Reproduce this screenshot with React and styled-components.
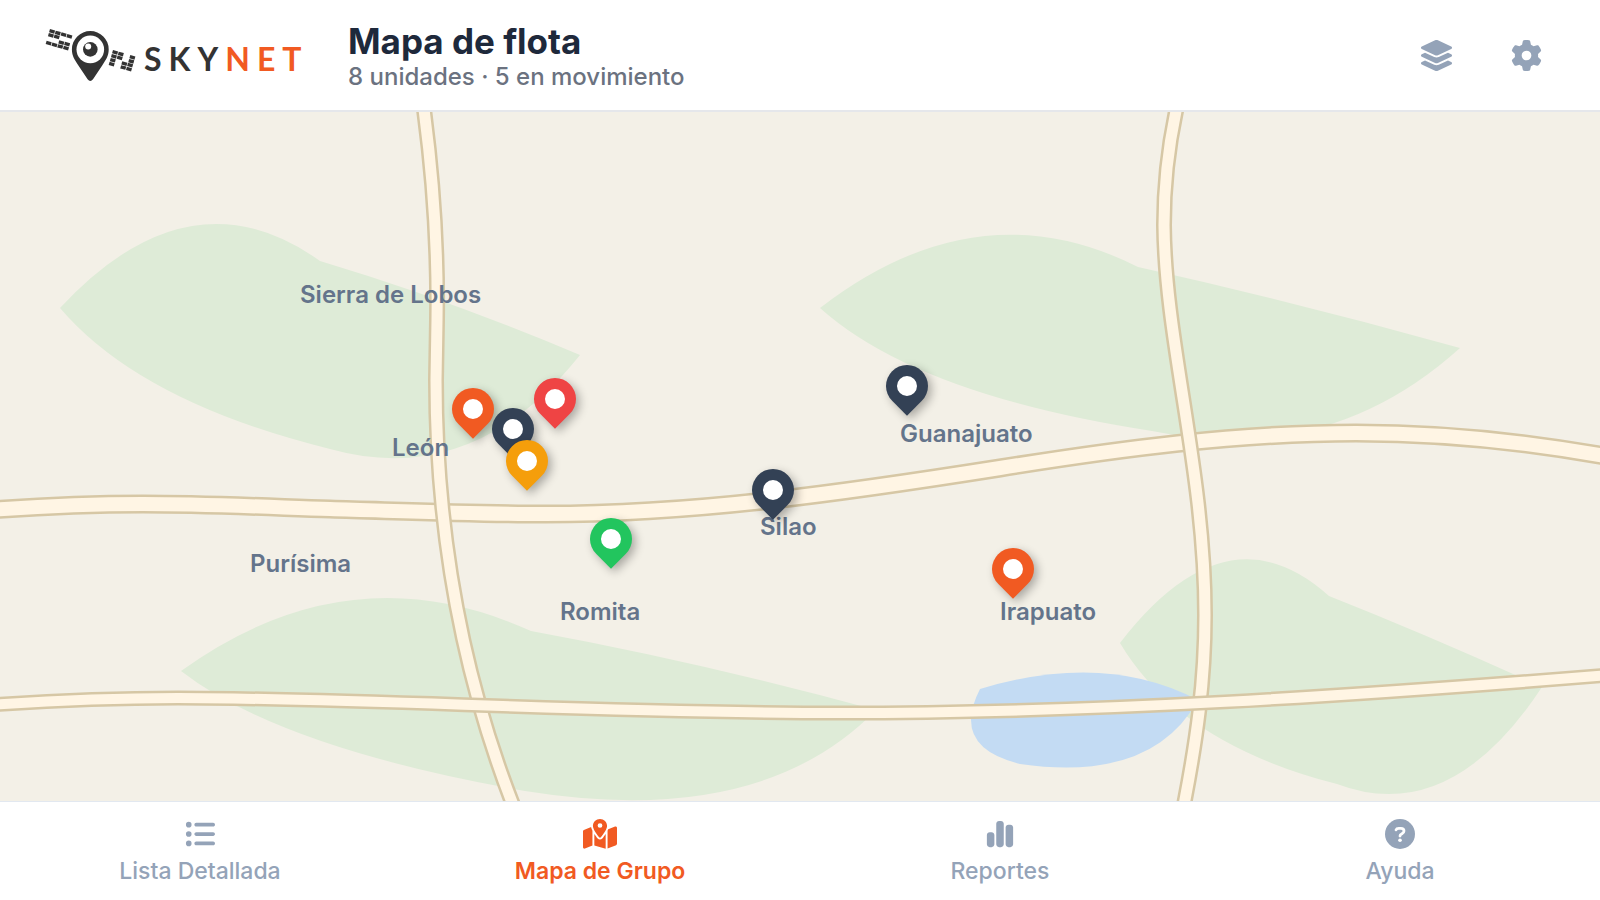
import React, { useState } from 'react';
import styled, { createGlobalStyle } from 'styled-components';
import {
  FaChartSimple,
  FaGear,
  FaLayerGroup,
  FaListUl,
  FaMapLocationDot,
} from 'react-icons/fa6';

const ORANGE = '#f15a22';
const NAVY = '#334155';

// x, y en % del mapa (centro del pin)
const units = [
  { id: 'u1', color: ORANGE, x: 29.55, y: 43.1 },
  { id: 'u2', color: NAVY, x: 32.05, y: 46 },
  { id: 'u3', color: '#ef4444', x: 34.7, y: 41.65 },
  { id: 'u4', color: '#f59e0b', x: 32.95, y: 50.65 },
  { id: 'u5', color: '#22c55e', x: 38.2, y: 62 },
  { id: 'u6', color: NAVY, x: 48.3, y: 54.9 },
  { id: 'u7', color: NAVY, x: 56.7, y: 39.8 },
  { id: 'u8', color: ORANGE, x: 63.3, y: 66.3 },
];

const places = [
  { name: 'Sierra de Lobos', x: 18.75, y: 26.5 },
  { name: 'León', x: 24.5, y: 48.7 },
  { name: 'Purísima', x: 15.625, y: 65.6 },
  { name: 'Romita', x: 35, y: 72.5 },
  { name: 'Silao', x: 47.5, y: 60.3 },
  { name: 'Guanajuato', x: 56.25, y: 46.7 },
  { name: 'Irapuato', x: 62.5, y: 72.5 },
];

const roads = [
  {
    id: 'main',
    d: 'M-10,398 Q72,392 143,392 C205,392 268,395 330,397 C402,399 473,402 545,402 C697,402 848,380 1000,356 C1119,337 1237,321 1356,321 Q1478,321 1610,345',
    outer: 19,
    inner: 14,
  },
  {
    id: 'west',
    d: 'M423,-10 C434,70 438,138 437,208 L436,268 C436,408 459,558 517,703',
    outer: 16,
    inner: 11,
  },
  {
    id: 'east',
    d: 'M1178,-10 C1167,38 1164,78 1164,113 C1165,230 1205,358 1205,503 C1205,568 1197,628 1182,703',
    outer: 16,
    inner: 11,
  },
  {
    id: 'south',
    d: 'M-10,593 Q90,586 178,586 C360,586 600,601 840,601 C1100,601 1350,584 1610,563',
    outer: 15,
    inner: 10,
  },
];

const forests = [
  'M60,196 Q190,56 320,149 Q450,188 580,243 Q473,377 330,337 Q140,290 60,196 Z',
  'M820,196 Q978,74 1138,155 Q1300,191 1460,236 Q1328,355 1152,319 Q917,283 820,196 Z',
  'M181,559 Q350,437 531,519 Q700,550 876,598 Q760,717 525,679 Q280,636 181,559 Z',
  'M1120,531 Q1227,392 1329,484 Q1430,524 1542,575 Q1450,715 1337,672 Q1180,632 1120,531 Z',
];

const tabs = [
  { id: 'lista', label: 'Lista Detallada', icon: FaListUl, size: 30 },
  { id: 'mapa', label: 'Mapa de Grupo', icon: FaMapLocationDot, size: 34 },
  { id: 'reportes', label: 'Reportes', icon: FaChartSimple, size: 30 },
  { id: 'ayuda', label: 'Ayuda', icon: HelpIcon, size: 30 },
];

// Celdas de los paneles solares del satélite: forman una S y una N
const panelS = ['1111', '1100', '0011', '1111'];
const panelN = ['1101', '1101', '1011', '1011'];

function SolarPanel({ rows, x, y }) {
  return (
    <g transform={`translate(${x} ${y}) rotate(16)`}>
      {rows.map((row, r) =>
        row
          .split('')
          .map((cell, c) =>
            cell === '1' ? (
              <rect
                key={`${r}-${c}`}
                x={c * 6}
                y={r * 4.1}
                width={5.3}
                height={3.4}
              />
            ) : null
          )
      )}
    </g>
  );
}

function HelpIcon() {
  return (
    <svg viewBox="0 0 512 512" fill="currentColor">
      <circle cx="256" cy="256" r="256" />
      <path
        d="M188 186 C194 168 212 160 236 160 H270 C302 160 324 178 324 206 C324 232 308 243 290 253 C268 265 256 272 256 292"
        fill="none"
        stroke="#fff"
        strokeWidth="48"
        strokeLinecap="round"
      />
      <circle cx="256" cy="362" r="31" fill="#fff" />
    </svg>
  );
}

function Logo() {
  return (
    <Brand href="#" aria-label="Skynet">
      <svg width="92" height="54" viewBox="0 0 92 54" fill="#333333">
        <SolarPanel rows={panelS} x={5} y={1} />
        <path d="M45.3 3 a18.4 18.4 0 0 1 18.4 18.4 c0 6.5 -3 10.5 -6.5 16 L48 51.2 q-2.7 3.4 -5.4 0 L33.4 37.4 c-3.5 -5.5 -6.5 -9.5 -6.5 -16 A18.4 18.4 0 0 1 45.3 3 Z" />
        <circle cx="45.3" cy="21.4" r="13.8" fill="#fff" />
        <circle cx="45.3" cy="21.4" r="7.3" />
        <circle cx="43.2" cy="18.4" r="3" fill="#fff" />
        <SolarPanel rows={panelN} x={68} y={22} />
      </svg>
      <Wordmark>
        SKY<b>NET</b>
      </Wordmark>
    </Brand>
  );
}

function FleetMap() {
  return (
    <MapArea>
      <MapCanvas
        viewBox="0 0 1600 689"
        preserveAspectRatio="none"
        aria-hidden="true"
      >
        {forests.map((d) => (
          <path key={d} d={d} fill="#deebd7" />
        ))}
        <path
          d="M980,577 Q1105,539 1198,588 Q1152,671 1020,652 Q950,635 980,577 Z"
          fill="#c3dbf3"
        />
        {roads.map((road) => (
          <g key={road.id} fill="none">
            <path d={road.d} stroke="#d6c7a5" strokeWidth={road.outer} />
            <path d={road.d} stroke="#fff5e4" strokeWidth={road.inner} />
          </g>
        ))}
      </MapCanvas>
      {places.map((place) => (
        <Place
          key={place.name}
          style={{ left: `${place.x}%`, top: `${place.y}%` }}
        >
          {place.name}
        </Place>
      ))}
      {units.map((unit) => (
        <Pin
          key={unit.id}
          type="button"
          aria-label={unit.id}
          $color={unit.color}
          style={{ left: `${unit.x}%`, top: `${unit.y}%` }}
        />
      ))}
    </MapArea>
  );
}

function App() {
  const [active, setActive] = useState('mapa');

  return (
    <>
      <GlobalStyle />
      <Page>
        <Header>
          <Logo />
          <Heading>
            <Title>Mapa de flota</Title>
            <Subtitle>8 unidades · 5 en movimiento</Subtitle>
          </Heading>
          <Actions>
            <IconButton type="button" aria-label="Capas" $size={35}>
              <FaLayerGroup />
            </IconButton>
            <IconButton type="button" aria-label="Ajustes" $size={31}>
              <FaGear />
            </IconButton>
          </Actions>
        </Header>
        <FleetMap />
        <TabBar>
          {tabs.map(({ id, label, icon: Icon, size }) => (
            <Tab
              key={id}
              type="button"
              $active={id === active}
              onClick={() => setActive(id)}
            >
              <TabIcon $size={size}>
                <Icon />
              </TabIcon>
              {label}
            </Tab>
          ))}
        </TabBar>
      </Page>
    </>
  );
}

const GlobalStyle = createGlobalStyle`
  * {
    box-sizing: border-box;
  }
  body {
    margin: 0;
    font-family: Inter, 'Liberation Sans', sans-serif;
    background-color: #fff;
  }
  button {
    font-family: inherit;
    border: none;
    background: none;
    padding: 0;
    cursor: pointer;
  }
`;

const Page = styled.div`
  display: flex;
  flex-direction: column;
  height: 100vh;
`;

const Header = styled.header`
  display: flex;
  align-items: center;
  padding: 19px 41px;
  border-bottom: 2px solid #e5e7eb;
`;
const Brand = styled.a`
  display: flex;
  align-items: center;
  gap: 7px;
  width: 307px;
  padding-left: 4px;
  text-decoration: none;
`;
const Wordmark = styled.span`
  font-family: Lato, sans-serif;
  font-size: 32px;
  line-height: 32px;
  font-weight: 700;
  letter-spacing: 7px;
  color: #333333;
  padding-top: 8px;
  b {
    font-weight: 700;
    color: ${ORANGE};
  }
`;
const Heading = styled.div`
  flex: 1;
`;
const Title = styled.h1`
  margin: 0;
  font-size: 35px;
  line-height: 44px;
  font-weight: 700;
  color: #1e293b;
`;
const Subtitle = styled.p`
  margin: 0;
  font-size: 24px;
  line-height: 28px;
  font-weight: 500;
  color: #6b7280;
`;
const Actions = styled.div`
  display: flex;
  gap: 24px;
`;
const IconButton = styled.button`
  display: flex;
  align-items: center;
  justify-content: center;
  width: 66px;
  height: 66px;
  color: #94a3b8;
  svg {
    height: ${(props) => props.$size}px;
    width: auto;
  }
`;

const MapArea = styled.main`
  position: relative;
  flex: 1;
  min-height: 0;
  overflow: hidden;
  background-color: #f3f0e7;
`;
const MapCanvas = styled.svg`
  display: block;
  width: 100%;
  height: 100%;
`;
const Place = styled.span`
  position: absolute;
  transform: translateY(-50%);
  font-size: 24px;
  line-height: 28px;
  font-weight: 600;
  white-space: nowrap;
  color: #64748b;
`;
const Pin = styled.button`
  position: absolute;
  display: grid;
  place-items: center;
  width: 42px;
  height: 42px;
  margin: -21px 0 0 -21px;
  border-radius: 50% 50% 50% 0;
  background-color: ${(props) => props.$color};
  box-shadow: 0 5px 10px rgba(0, 0, 0, 0.3);
  transform: rotate(-45deg);
  &::after {
    content: '';
    width: 20px;
    height: 20px;
    border-radius: 50%;
    background-color: #fff;
  }
`;

const TabBar = styled.nav`
  display: grid;
  grid-template-columns: repeat(4, 1fr);
  border-top: 1px solid #e2e8f0;
`;
const Tab = styled.button`
  display: flex;
  flex-direction: column;
  align-items: center;
  gap: 8px;
  padding: 17px 0 15px;
  font-size: 23px;
  line-height: 28px;
  font-weight: ${(props) => (props.$active ? 600 : 500)};
  color: ${(props) => (props.$active ? ORANGE : '#94a3b8')};
`;
const TabIcon = styled.span`
  display: flex;
  align-items: center;
  height: 30px;
  svg {
    height: ${(props) => props.$size}px;
    width: auto;
  }
`;

export default App;
